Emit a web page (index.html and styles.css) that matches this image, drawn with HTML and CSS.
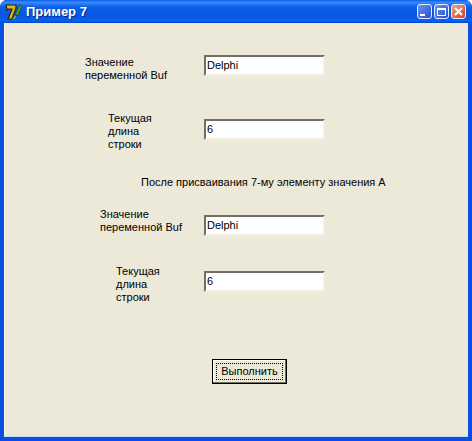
FILE: index.html
```html
<!DOCTYPE html>
<html lang="ru">
<head>
  <meta charset="UTF-8">
  <title>Пример 7</title>
  <link rel="stylesheet" href="styles.css">
</head>
<body>
  <div class="window">
    <div class="titlebar">
      <svg class="app-icon" width="18" height="18" viewBox="0 0 18 18">
        <path d="M1 2h10v3l-4 11H3l4-10H3L2 7z" fill="#e0b818" stroke="#262410" stroke-width="1.2"/>
        <path d="M10 12l5-10 2 1-4 9z" fill="#58b028" stroke="#1c3c10" stroke-width="0.7"/>
        <path d="M8 16l3-3" stroke="#68c030" stroke-width="1.6"/>
      </svg>
      <span class="title">Пример 7</span>
      <div class="win-buttons">
        <div class="win-btn"><span class="glyph-min"></span></div>
        <div class="win-btn"><span class="glyph-max"></span></div>
        <div class="win-btn close">
          <svg width="9" height="9" viewBox="0 0 9 9"><path d="M1 1l7 7M8 1l-7 7" stroke="#fff" stroke-width="2"/></svg>
        </div>
      </div>
    </div>

    <div class="client">
      <div class="row row1">
        <label class="lbl lbl1">Значение<br>переменной Buf</label>
        <div class="edit">Delphi</div>
      </div>
      <div class="row row2">
        <label class="lbl lbl2">Текущая<br>длина<br>строки</label>
        <div class="edit">6</div>
      </div>
      <div class="caption">После присваивания 7-му элементу значения А</div>
      <div class="row row3">
        <label class="lbl lbl3">Значение<br>переменной Buf</label>
        <div class="edit">Delphi</div>
      </div>
      <div class="row row4">
        <label class="lbl lbl4">Текущая<br>длина<br>строки</label>
        <div class="edit">6</div>
      </div>
      <div class="actions">
        <button class="run"><span class="focus">Выполнить</span></button>
      </div>
    </div>
  </div>
</body>
</html>
```

FILE: styles.css
```css
body {
  margin: 0;
  font-family: "Liberation Sans", Arial, sans-serif;
  font-size: 11px;
  color: #000;
}
.window {
  width: 472px;
  height: 441px;
  box-sizing: border-box;
  display: flex;
  flex-direction: column;
  background: #0a4fe0;
  border-radius: 7px 7px 0 0;
  overflow: hidden;
}
.titlebar {
  height: 23px;
  flex: none;
  display: flex;
  align-items: center;
  padding: 0 6px 0 5px;
  background: linear-gradient(to bottom, #0a5ae8 0%, #3a8cf8 10%, #0a5fe8 30%, #0656e0 70%, #0a62ee 90%, #0344c8 100%);
}
.app-icon {
  margin-right: 3px;
}
.title {
  flex: 1;
  color: #fff;
  font-weight: bold;
  font-size: 13px;
  text-shadow: 1px 1px 0 #0a2a90;
}
.win-buttons {
  display: flex;
  gap: 2px;
}
.win-btn {
  width: 13px;
  height: 13px;
  border: 1px solid #e8eefc;
  border-radius: 3px;
  background: linear-gradient(135deg, #6a94ee, #2450d0);
  display: flex;
  align-items: center;
  justify-content: center;
}
.win-btn.close {
  background: linear-gradient(135deg, #f0a080, #d84020);
}
.glyph-min {
  width: 5px;
  height: 2px;
  background: #fff;
  align-self: flex-end;
  margin: 0 4px 2px 0;
}
.glyph-max {
  width: 7px;
  height: 5px;
  border: 1px solid #fff;
  border-top-width: 2px;
}
.client {
  flex: 1;
  margin: 0 4px 4px 4px;
  background: #ece9d8;
  box-shadow: inset 1px 0 0 #f8f6ee, inset 0 -1px 0 #c8d8f0;
}
.row {
  display: flex;
  align-items: center;
  height: 21px;
}
.row1 { margin-top: 32px; }
.row2 { margin-top: 43px; }
.row3 { margin-top: 26px; }
.row4 { margin-top: 35px; }
.lbl {
  width: 200px;
  box-sizing: border-box;
  flex: none;
  line-height: 13px;
}
.lbl1 { padding-left: 81px; margin-top: 6px; }
.lbl2 { padding-left: 104px; margin-top: 4px; }
.lbl3 { padding-left: 96px; margin-bottom: 10px; }
.lbl4 { padding-left: 112px; margin-top: 5px; }
.edit {
  width: 121px;
  height: 21px;
  box-sizing: border-box;
  padding: 2px 0 0 1px;
  background: #fff;
  border-top: 2px solid #716f64;
  border-left: 2px solid #716f64;
  border-right: 2px solid #f1efe2;
  border-bottom: 2px solid #f1efe2;
}
.caption {
  margin-top: 35px;
  padding-left: 137px;
  height: 14px;
  line-height: 14px;
}
.actions {
  margin-top: 67px;
  padding-left: 208px;
}
.run {
  width: 75px;
  height: 25px;
  padding: 0;
  background: #ece9d8;
  border: 1px solid #000;
  box-shadow: inset -1px -1px 0 #716f64, inset 1px 1px 0 #fff;
  font: inherit;
  display: flex;
  align-items: stretch;
}
.focus {
  flex: 1;
  margin: 3px;
  border: 1px dotted #000;
  line-height: 15px;
}
```
